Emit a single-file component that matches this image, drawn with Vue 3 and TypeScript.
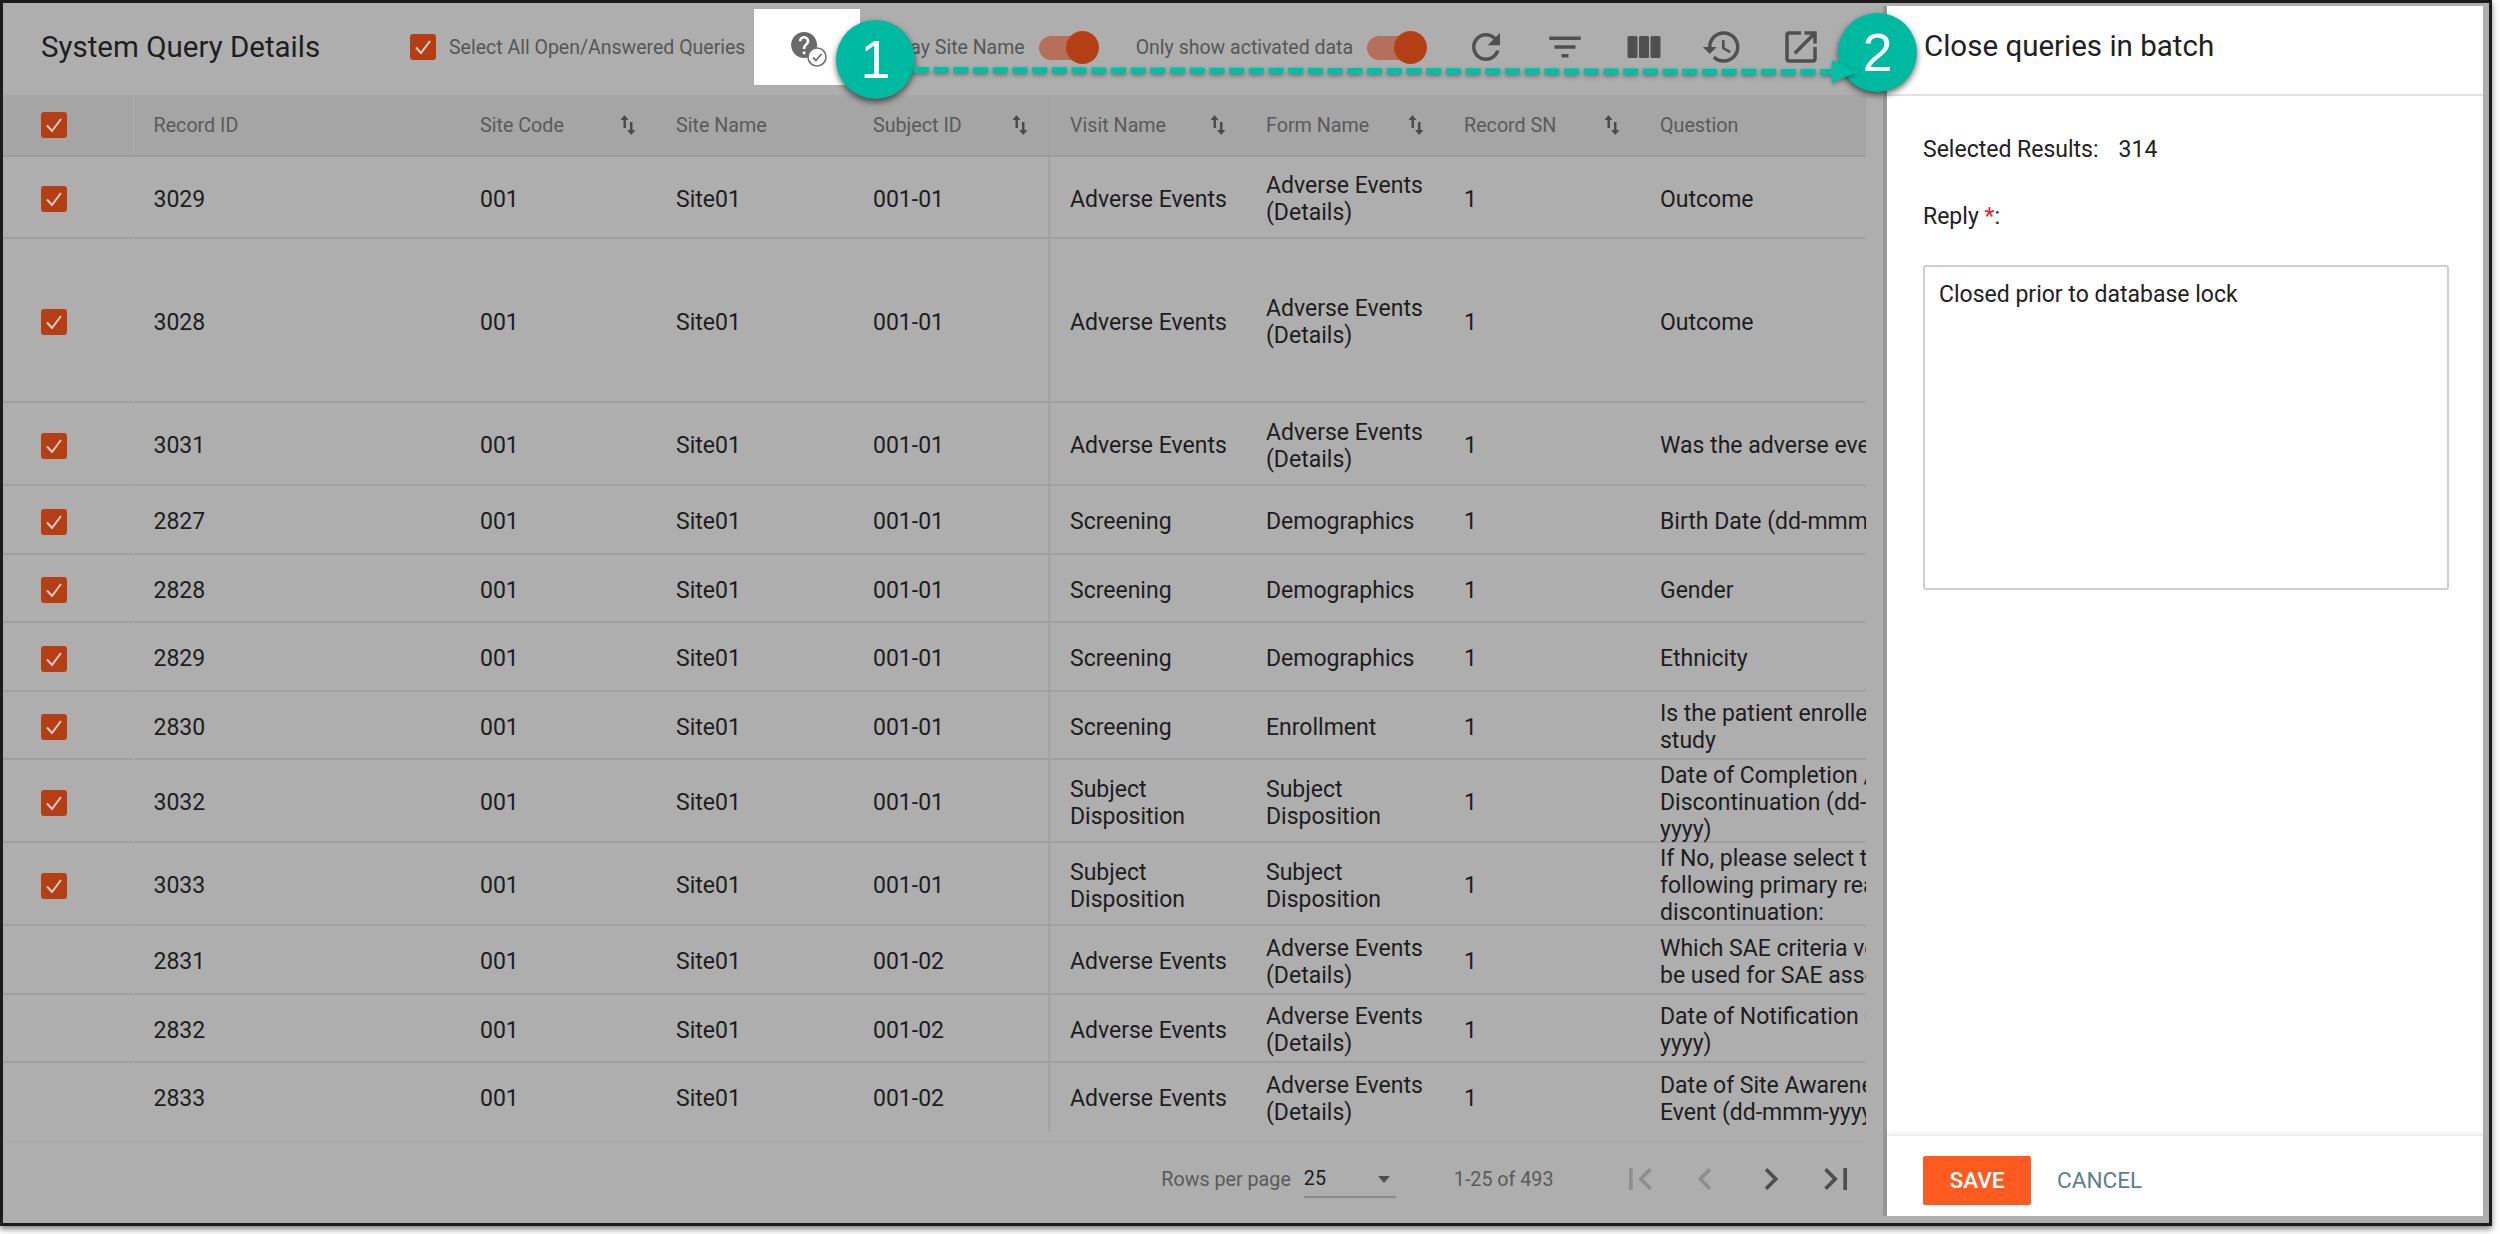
<template>
  <div class="shot">
    <div class="frame">
      <div class="main">
        <!-- Toolbar -->
        <div class="toolbar">
          <h1 class="toolbar__title">System Query Details</h1>
          <label class="toolbar__select">
            <span class="check">
              <svg viewBox="0 0 26 26"><path d="M6 13.5l5 5.5 9-12" /></svg>
            </span>
            <span class="toolbar__label">Select All Open/Answered Queries</span>
          </label>
          <div class="toolbar__tile">
            <svg class="tile-icon" viewBox="0 0 44 44">
              <path
                transform="translate(2.5 1.5) scale(1.3)"
                d="M12 2C6.48 2 2 6.48 2 12s4.48 10 10 10 10-4.48 10-10S17.52 2 12 2zm1 17h-2v-2h2v2zm2.07-7.75l-.9.92C13.45 12.9 13 13.5 13 15h-2v-.5c0-1.1.45-2.1 1.17-2.83l1.24-1.26c.37-.36.59-.86.59-1.41 0-1.1-.9-2-2-2s-2 .9-2 2H8c0-2.21 1.79-4 4-4s4 1.79 4 4c0 .88-.36 1.68-.93 2.25z"
              />
              <circle class="tile-icon__ring" cx="31" cy="29" r="9" />
              <path class="tile-icon__tick" d="M27 29.5l3 3 5.5-6.5" />
            </svg>
          </div>
          <div class="toolbar__switch toolbar__switch--site">
            <span class="toolbar__label">Display Site Name</span>
            <span class="switch"><i /></span>
          </div>
          <div class="toolbar__switch toolbar__switch--active">
            <span class="toolbar__label">Only show activated data</span>
            <span class="switch"><i /></span>
          </div>
          <div class="toolbar__icons">
            <svg class="tool-icon" viewBox="0 0 24 24">
              <path d="M17.65 6.35C16.2 4.9 14.21 4 12 4c-4.42 0-7.99 3.58-7.99 8s3.57 8 7.99 8c3.73 0 6.84-2.55 7.73-6h-2.08c-.82 2.33-3.04 4-5.65 4-3.31 0-6-2.69-6-6s2.69-6 6-6c1.66 0 3.14.69 4.22 1.78L13 11h7V4l-2.35 2.35z" />
            </svg>
            <svg class="tool-icon" viewBox="0 0 24 24">
              <path d="M10 18h4v-2h-4v2zM3 6v2h18V6H3zm3 7h12v-2H6v2z" />
            </svg>
            <svg class="tool-icon" viewBox="0 0 42 42">
              <rect x="4.5" y="10" width="10" height="22" rx="1.5" />
              <rect x="16" y="10" width="10" height="22" rx="1.5" />
              <rect x="27.5" y="10" width="10" height="22" rx="1.5" />
            </svg>
            <svg class="tool-icon" viewBox="0 0 24 24">
              <path d="M13 3c-4.97 0-9 4.03-9 9H1l3.89 3.89.07.14L9 12H6c0-3.87 3.13-7 7-7s7 3.13 7 7-3.13 7-7 7c-1.93 0-3.68-.79-4.94-2.06l-1.42 1.42C8.27 19.99 10.51 21 13 21c4.97 0 9-4.03 9-9s-4.03-9-9-9zm-1 5v5l4.28 2.54.72-1.21-3.5-2.08V8H12z" />
            </svg>
            <svg class="tool-icon" viewBox="0 0 24 24">
              <path d="M19 19H5V5h7V3H5c-1.11 0-2 .9-2 2v14c0 1.1.89 2 2 2h14c1.1 0 2-.9 2-2v-7h-2v7zM14 3v2h3.59l-9.83 9.83 1.41 1.41L19 6.41V10h2V3h-7z" />
            </svg>
          </div>
        </div>

        <!-- Table -->
        <div class="table-wrap">
          <table class="grid">
            <colgroup>
              <col v-for="w in colWidths" :key="w.id" :style="{ width: w.px + 'px' }" />
            </colgroup>
            <thead>
              <tr>
                <th class="cell-check">
                  <span class="check">
                    <svg viewBox="0 0 26 26"><path d="M6 13.5l5 5.5 9-12" /></svg>
                  </span>
                </th>
                <th v-for="col in columns" :key="col.label" :class="{ 'cell-pin': col.pin }">
                  <div class="grid__head">
                    <span>{{ col.label }}</span>
                    <svg v-if="col.sort" class="sort-icon" viewBox="0 0 16 20">
                      <path d="M4.5 0 8.5 5H6v8H3.500V5H.5z" />
                      <path d="M10 7h2.500v8H15.500l-4.300 5-4.200-5H10z" />
                    </svg>
                  </div>
                </th>
              </tr>
            </thead>
            <tbody>
              <tr v-for="row in rows" :key="row.id" :style="{ height: row.h + 'px' }">
                <td class="cell-check">
                  <span v-if="row.checked" class="check">
                    <svg viewBox="0 0 26 26"><path d="M6 13.5l5 5.5 9-12" /></svg>
                  </span>
                </td>
                <td>{{ row.id }}</td>
                <td>001</td>
                <td>Site01</td>
                <td class="cell-pin">{{ row.subject }}</td>
                <td>{{ row.visit }}</td>
                <td>{{ row.form }}</td>
                <td>1</td>
                <td>{{ row.question }}</td>
              </tr>
            </tbody>
          </table>
        </div>

        <!-- Pager -->
        <div class="pager">
          <span class="pager__label">Rows per page</span>
          <span class="pager__select">25<i /></span>
          <span class="pager__label pager__range">1-25 of 493</span>
          <div class="pager__nav">
            <svg class="pager__btn is-off" viewBox="0 0 24 24"><path d="M18.41 16.59L13.82 12l4.59-4.59L17 6l-6 6 6 6zM6 6h2v12H6z" /></svg>
            <svg class="pager__btn is-off" viewBox="0 0 24 24"><path d="M15.41 7.41L14 6l-6 6 6 6 1.41-1.41L10.83 12z" /></svg>
            <svg class="pager__btn" viewBox="0 0 24 24"><path d="M10 6L8.59 7.41 13.17 12l-4.58 4.59L10 18l6-6z" /></svg>
            <svg class="pager__btn" viewBox="0 0 24 24"><path d="M5.59 7.41L10.18 12l-4.59 4.59L7 18l6-6-6-6zM16 6h2v12h-2z" /></svg>
          </div>
        </div>
      </div>

      <!-- Drawer -->
      <aside class="drawer">
        <div class="drawer__header">Close queries in batch</div>
        <div class="drawer__body">
          <p class="drawer__line">Selected Results:<span class="drawer__count">314</span></p>
          <p class="drawer__line">Reply <em>*</em>:</p>
          <textarea class="drawer__input" readonly :value="reply" />
        </div>
        <div class="drawer__footer">
          <button class="btn-save" type="button">SAVE</button>
          <button class="btn-cancel" type="button">CANCEL</button>
        </div>
      </aside>
    </div>

    <!-- Callouts drawn over the screenshot -->
    <div class="badge badge--one">1</div>
    <div class="badge badge--two">2</div>
    <svg class="arrow" viewBox="0 0 2500 1234">
      <line x1="914" y1="70" x2="1834" y2="72" />
      <polygon points="1832,60 1857,72 1832,83" />
    </svg>
  </div>
</template>

<script setup lang="ts">
interface Column {
  label: string
  sort?: boolean
  pin?: boolean
}

interface Row {
  id: string
  h: number
  checked: boolean
  subject: string
  visit: string
  form: string
  question: string
}

const reply = 'Closed prior to database lock'

const colWidths = [130, 327, 196, 197, 196, 197, 198, 196, 400].map((px, id) => ({ id, px }))

const columns: Column[] = [
  { label: 'Record ID' },
  { label: 'Site Code', sort: true },
  { label: 'Site Name' },
  { label: 'Subject ID', sort: true, pin: true },
  { label: 'Visit Name', sort: true },
  { label: 'Form Name', sort: true },
  { label: 'Record SN', sort: true },
  { label: 'Question' }
]

const ae = 'Adverse Events'
const aeDetails = 'Adverse Events\n(Details)'
const disposition = 'Subject\nDisposition'

const rows: Row[] = [
  { id: '3029', h: 83, checked: true, subject: '001-01', visit: ae, form: aeDetails, question: 'Outcome' },
  { id: '3028', h: 164, checked: true, subject: '001-01', visit: ae, form: aeDetails, question: 'Outcome' },
  { id: '3031', h: 83, checked: true, subject: '001-01', visit: ae, form: aeDetails, question: 'Was the adverse event serious?' },
  { id: '2827', h: 69, checked: true, subject: '001-01', visit: 'Screening', form: 'Demographics', question: 'Birth Date (dd-mmm-yyyy)' },
  { id: '2828', h: 68, checked: true, subject: '001-01', visit: 'Screening', form: 'Demographics', question: 'Gender' },
  { id: '2829', h: 69, checked: true, subject: '001-01', visit: 'Screening', form: 'Demographics', question: 'Ethnicity' },
  { id: '2830', h: 68, checked: true, subject: '001-01', visit: 'Screening', form: 'Enrollment', question: 'Is the patient enrolled in the\nstudy' },
  { id: '3032', h: 83, checked: true, subject: '001-01', visit: disposition, form: disposition, question: 'Date of Completion /\nDiscontinuation (dd-mmm-\nyyyy)' },
  { id: '3033', h: 83, checked: true, subject: '001-01', visit: disposition, form: disposition, question: 'If No, please select the\nfollowing primary reason for\ndiscontinuation:' },
  { id: '2831', h: 69, checked: false, subject: '001-02', visit: ae, form: aeDetails, question: 'Which SAE criteria version will\nbe used for SAE assessment' },
  { id: '2832', h: 68, checked: false, subject: '001-02', visit: ae, form: aeDetails, question: 'Date of Notification (dd-mmm-\nyyyy)' },
  { id: '2833', h: 69, checked: false, subject: '001-02', visit: ae, form: aeDetails, question: 'Date of Site Awareness of\nEvent (dd-mmm-yyyy)' }
]
</script>

<style>
html,
body {
  margin: 0;
  background: #fff;
}
</style>

<style scoped>
.shot {
  position: relative;
  width: 2500px;
  height: 1234px;
  overflow: hidden;
  background: #fff;
  font-family: Roboto, 'Liberation Sans', sans-serif;
}

.frame {
  display: flex;
  box-sizing: border-box;
  width: 2492px;
  height: 1226px;
  border: 3px solid #1c1c1c;
  background: #aeaeae;
  box-shadow: 0 3px 6px rgba(0, 0, 0, 0.5);
}

.main {
  display: flex;
  flex: 0 0 1880px;
  flex-direction: column;
  min-width: 0;
}

/* Toolbar */
.toolbar {
  display: flex;
  flex: 0 0 92px;
  align-items: center;
  box-sizing: border-box;
  padding: 0 0 4px 38px;
}

.toolbar__title {
  flex: 0 0 369px;
  margin: 0;
  font-size: 29.5px;
  font-weight: 400;
  color: #1e1e1e;
}

.toolbar__select {
  display: flex;
  flex: 0 0 344px;
  align-items: center;
  gap: 13px;
}

.toolbar__label {
  font-size: 19.5px;
  color: #565656;
  white-space: nowrap;
}

.toolbar__tile {
  display: flex;
  flex: 0 0 106px;
  align-items: center;
  justify-content: center;
  height: 76px;
  background: #fff;
}

.tile-icon {
  width: 44px;
  height: 44px;
  margin: 6px 0 0 2px;
  fill: #6a6a6a;
}

.tile-icon__ring {
  fill: #fff;
  stroke: #707070;
  stroke-width: 1.6;
}

.tile-icon__tick {
  fill: none;
  stroke: #707070;
  stroke-width: 1.8;
}

.toolbar__switch {
  display: flex;
  align-items: center;
  gap: 14px;
}

.toolbar__switch--site {
  margin-left: 7px;
}

.toolbar__switch--active {
  margin-left: 37px;
}

.switch {
  position: relative;
  display: block;
  width: 60px;
  height: 33px;
}

.switch::before {
  content: '';
  position: absolute;
  top: 5px;
  left: 0;
  width: 44px;
  height: 24px;
  border-radius: 12px;
  background: #b5705c;
}

.switch i {
  position: absolute;
  top: 0;
  left: 27px;
  width: 33px;
  height: 33px;
  border-radius: 50%;
  background: #b53f15;
}

.toolbar__icons {
  display: flex;
  align-items: center;
  gap: 36.800px;
  margin-left: 38px;
}

.tool-icon {
  display: block;
  width: 42px;
  height: 42px;
  fill: #505050;
}

/* Shared checkbox */
.check {
  display: inline-flex;
  flex: none;
  width: 26px;
  height: 26px;
  border-radius: 3px;
  background: #b53f15;
  vertical-align: middle;
}

.check svg {
  width: 26px;
  height: 26px;
  fill: none;
  stroke: #d6cfcb;
  stroke-width: 2;
}

/* Table */
.table-wrap {
  flex: 1;
  width: 1863px;
  min-height: 0;
  overflow: hidden;
  border-bottom: 1px solid #a9a9a9;
}

.grid {
  width: 2037px;
  table-layout: fixed;
  border-collapse: collapse;
}

.grid th {
  height: 60px;
  padding: 0 20px;
  border-bottom: 2px solid #9c9c9c;
  background: #a5a5a5;
  font-size: 19.7px;
  font-weight: 400;
  color: #5a5a5a;
  text-align: left;
}

.grid td {
  padding: 2px 20px 0;
  box-shadow: inset 0 -2px 0 #a0a0a0;
  font-size: 23px;
  line-height: 27px;
  color: #1d1d1d;
  white-space: pre;
}

.grid tbody tr:last-child td {
  box-shadow: none;
}

.grid .cell-check {
  padding-left: 38px;
  padding-right: 0;
  border-right: 1px solid #acacac;
  line-height: 0;
}

.grid .cell-pin {
  border-right: 2px solid #a3a3a3;
}

.grid__head {
  display: flex;
  align-items: center;
  justify-content: space-between;
}

.sort-icon {
  width: 16px;
  height: 20px;
  fill: #4c4c4c;
}

/* Pager */
.pager {
  display: flex;
  flex: 0 0 81px;
  align-items: center;
  justify-content: flex-end;
  box-sizing: border-box;
  padding: 0 25px 7px 0;
}

.pager__label {
  font-size: 19.7px;
  color: #5a5a5a;
}

.pager__select {
  position: relative;
  box-sizing: border-box;
  width: 92px;
  height: 38px;
  margin-left: 13px;
  border-bottom: 2px solid #8a8a8a;
  font-size: 19.7px;
  line-height: 37px;
  color: #1d1d1d;
}

.pager__select i {
  position: absolute;
  top: 16px;
  right: 6px;
  border-top: 7px solid #505050;
  border-right: 6px solid transparent;
  border-left: 6px solid transparent;
}

.pager__range {
  margin-left: 58px;
}

.pager__nav {
  display: flex;
  gap: 21.500px;
  margin-left: 64px;
}

.pager__btn {
  display: block;
  width: 44px;
  height: 44px;
  fill: #4e4e4e;
}

.pager__btn.is-off {
  fill: #8e8e8e;
}

/* Drawer */
.drawer {
  display: flex;
  flex: 1;
  flex-direction: column;
  margin: 3px 6px 7px 0;
  border-left: 4px solid #979797;
  background: #fff;
}

.drawer__header {
  flex: 0 0 90px;
  box-sizing: border-box;
  padding-left: 37px;
  border-bottom: 2px solid #e2e2e2;
  font-size: 29.5px;
  line-height: 80px;
  color: #212121;
}

.drawer__body {
  display: flex;
  flex: 1;
  flex-direction: column;
  padding: 0 34px 0 36px;
}

.drawer__line {
  margin: 40px 0 0;
  font-size: 23px;
  line-height: 27px;
  color: #212121;
}

.drawer__line em {
  font-style: normal;
  color: #e8212a;
}

.drawer__count {
  margin-left: 20px;
}

.drawer__input {
  box-sizing: border-box;
  width: 100%;
  height: 325px;
  margin-top: 35px;
  padding: 14px 14px;
  border: 2px solid #cfcfcf;
  border-radius: 3px;
  outline: 0;
  resize: none;
  font-family: inherit;
  font-size: 23px;
  line-height: 27px;
  color: #212121;
}

.drawer__footer {
  display: flex;
  flex: 0 0 auto;
  align-items: center;
  box-sizing: border-box;
  gap: 26px;
  height: 81px;
  padding: 8px 0 0 36px;
  border-top: 1px solid #ececec;
  box-shadow: 0 -3px 5px rgba(0, 0, 0, 0.06);
}

.btn-save {
  width: 108px;
  height: 49px;
  border: 0;
  border-radius: 2px;
  background: #ff5a20;
  font-family: inherit;
  font-size: 22.6px;
  font-weight: 500;
  color: #fff;
}

.btn-cancel {
  padding: 0;
  border: 0;
  background: none;
  font-family: inherit;
  font-size: 22.6px;
  font-weight: 400;
  color: #5f7f8f;
}

/* Callouts */
.badge {
  position: absolute;
  width: 79px;
  height: 79px;
  border-radius: 50%;
  background: #00b9a1;
  box-shadow: 0 3px 6px rgba(0, 0, 0, 0.6);
  font-family: 'Liberation Sans', sans-serif;
  font-size: 54px;
  line-height: 79px;
  color: #fff;
  text-align: center;
}

.badge--one {
  top: 20px;
  left: 836px;
}

.badge--two {
  top: 13px;
  left: 1838px;
}

.arrow {
  position: absolute;
  top: 0;
  left: 0;
  width: 2500px;
  height: 1234px;
  filter: drop-shadow(0 2px 2px rgba(0, 0, 0, 0.35));
  pointer-events: none;
}

.arrow line {
  stroke: #00bfa5;
  stroke-width: 6;
  stroke-dasharray: 15 4.700;
}

.arrow polygon {
  fill: #00bfa5;
}
</style>
